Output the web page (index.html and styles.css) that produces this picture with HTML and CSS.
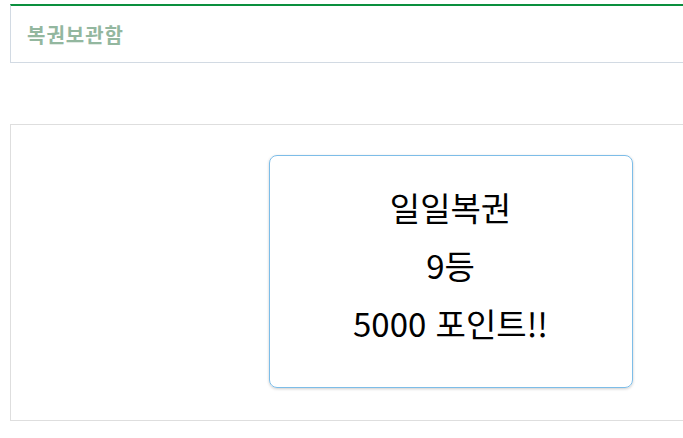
FILE: index.html
```html
<!DOCTYPE html>
<html lang="ko">
<head>
  <meta charset="UTF-8">
  <meta name="viewport" content="width=device-width, initial-scale=1.0">
  <title>복권보관함</title>
  <link rel="stylesheet" href="styles.css">
</head>
<body>

  <!-- Header -->
  <header class="box-header">
    <h2>복권보관함</h2>
  </header>

  <!-- Lottery list -->
  <section class="box-body">
    <div class="ticket">
      <p>일일복권</p>
      <p>9등</p>
      <p>5000 포인트!!</p>
    </div>
  </section>

</body>
</html>
```

FILE: styles.css
```css
body {
  font-family: "Noto Sans CJK KR", "Noto Sans", sans-serif;
  background-color: #fff;
  margin: 0;
  padding: 4px 0 0 10px;
  overflow: hidden;
}

.box-header {
  width: 880px;
  height: 56px;
  border-top: 2px solid #0a8f3e;
  border-left: 1px solid #d2dae3;
  border-bottom: 1px solid #d2dae3;
  display: flex;
  align-items: center;
  padding-left: 16px;
}

.box-header h2 {
  margin: 0;
  font-size: 20px;
  font-weight: bold;
  letter-spacing: 1px;
  color: #93b79f;
}

.box-body {
  width: 880px;
  margin-top: 61px;
  height: 297px;
  border-top: 1px solid #dedede;
  border-left: 1px solid #dedede;
  border-bottom: 1px solid #dedede;
  display: flex;
  justify-content: center;
  align-items: flex-start;
  padding-top: 30px;
  box-sizing: border-box;
}

.ticket {
  width: 362px;
  padding: 22px 0 35px;
  border: 1px solid #7dbde8;
  border-radius: 8px;
  box-shadow: 0 1px 3px rgba(0, 0, 0, 0.2);
  text-align: center;
}

.ticket p {
  margin: 0;
  font-size: 33px;
  line-height: 58px;
  color: #000;
}
```
